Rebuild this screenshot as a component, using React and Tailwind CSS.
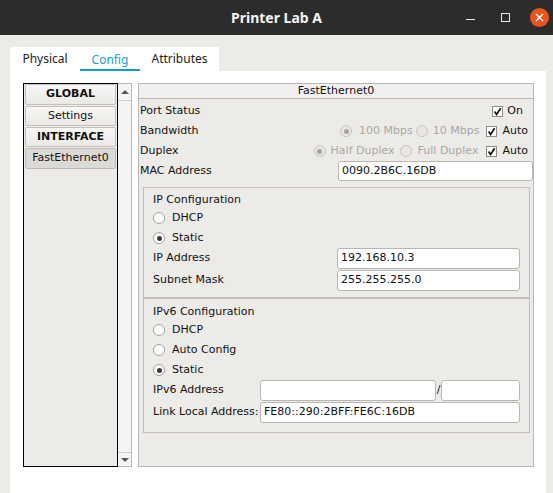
import React from "react";

const Check = () => (
  <div className="w-[11px] h-[11px] bg-white border border-[#8d8b88] flex items-center justify-center">
    <svg width="9" height="9" viewBox="0 0 9 9">
      <path d="M1.6 4.6 L3.6 7.4 L7.6 1.2" fill="none" stroke="#111" strokeWidth="1.7" />
    </svg>
  </div>
);

const Radio = ({ checked, disabled }) => (
  <div
    className={
      "w-[12px] h-[12px] rounded-full border flex items-center justify-center " +
      (disabled ? "bg-[#e8e6e3] border-[#c8c5c1]" : "bg-white border-[#a3a09b]")
    }
  >
    {checked && (
      <div
        className={
          "w-[5px] h-[5px] rounded-full " + (disabled ? "bg-[#a6a4a0]" : "bg-[#3a3a3a]")
        }
      />
    )}
  </div>
);

const Input = ({ value, className }) => (
  <div
    className={
      "h-[20px] bg-white border border-[#b9b6b1] rounded-[3px] flex items-center pl-[3px] text-[11px] text-[#111] whitespace-nowrap overflow-hidden " +
      (className || "")
    }
  >
    {value}
  </div>
);

const RadioRow = ({ label, checked, h }) => (
  <div className={"flex items-center gap-[7px] " + h}>
    <Radio checked={checked} />
    <span>{label}</span>
  </div>
);

export default function App() {
  return (
    <div className="w-[553px] h-[493px] bg-[#edebe8] flex flex-col overflow-hidden">
      {/* Title bar */}
      <div className="h-[35px] bg-[#2c2c2c] relative flex items-center justify-center shrink-0">
        <span className="text-[#f4f4f4] font-bold text-[14px] font-['Noto_Sans',sans-serif]">
          Printer Lab A
        </span>
        <div className="absolute right-[4px] top-0 h-full flex items-center">
          <div className="w-[9px] h-px bg-[#e8e8e8] mt-[3px] mr-[26px]" />
          <div className="w-[9px] h-[9px] border border-[#e8e8e8] mr-[20px]" />
          <div className="w-[19px] h-[19px] rounded-full bg-[#e9541f] flex items-center justify-center">
            <svg width="9" height="9" viewBox="0 0 9 9">
              <path d="M1 1 L8 8 M8 1 L1 8" stroke="white" strokeWidth="1.4" />
            </svg>
          </div>
        </div>
      </div>

      {/* Body */}
      <div className="flex-1 flex flex-col pl-[10px] pr-[7px] pt-[12px] min-h-0">
        {/* Tabs */}
        <div className="flex h-[24px] bg-white w-[209px] shrink-0 font-['Noto_Sans',sans-serif] text-[12px]">
          <div className="w-[70px] flex items-center justify-center text-[#222]">Physical</div>
          <div className="w-[60px] flex flex-col">
            <div className="flex-1 flex items-center justify-center text-[#1a9dd6] pt-[4px]">Config</div>
            <div className="h-[4px] bg-[#0f9bd7]" />
          </div>
          <div className="w-[79px] flex items-center justify-center text-[#222]">Attributes</div>
        </div>

        {/* Content */}
        <div className="flex-1 bg-white flex pl-[13px] pt-[12px] pb-[26px] min-h-0 font-['DejaVu_Sans',sans-serif] text-[11px] text-[#111]">
          {/* Left list */}
          <div className="w-[95px] h-full border border-black bg-[#edebe8] flex flex-col px-[1px] pt-0 gap-[1px]">
            <div className="h-[21px] rounded-[2px] border border-[#c4c1bc] bg-gradient-to-b from-[#f8f7f6] to-[#ebe9e6] flex items-center justify-center font-bold">
              GLOBAL
            </div>
            <div className="h-[20px] rounded-[2px] border border-[#c4c1bc] bg-gradient-to-b from-[#f8f7f6] to-[#ebe9e6] flex items-center justify-center">
              Settings
            </div>
            <div className="h-[20px] rounded-[2px] border border-[#c4c1bc] bg-gradient-to-b from-[#f8f7f6] to-[#ebe9e6] flex items-center justify-center font-bold">
              INTERFACE
            </div>
            <div className="h-[21px] rounded-[2px] border border-[#bdbab5] bg-[#dcdad6] flex items-center justify-center">
              FastEthernet0
            </div>
          </div>
          {/* Scrollbar */}
          <div className="w-[14px] h-full border border-[#b9b9b9] border-l-0 bg-[#f4f4f4] flex flex-col">
            <div className="h-[17px] border-b border-[#cfcfcf] flex items-center justify-center">
              <div className="w-0 h-0 border-l-[4px] border-r-[4px] border-b-[4px] border-l-transparent border-r-transparent border-b-[#555]" />
            </div>
            <div className="flex-1" />
            <div className="h-[14px] border-t border-[#cfcfcf] flex items-center justify-center">
              <div className="w-0 h-0 border-l-[4px] border-r-[4px] border-t-[4px] border-l-transparent border-r-transparent border-t-[#555]" />
            </div>
          </div>

          {/* Right panel */}
          <div className="ml-[6px] w-[396px] h-full border border-[#bcb9b4] bg-[#edebe8] flex flex-col">
            <div className="h-[15px] border-b border-[#bcb9b4] bg-[#f1f0ee] flex items-center justify-center">
              FastEthernet0
            </div>
            <div className="flex flex-col pt-[2px]">
              <div className="h-[20px] flex items-center pl-[1px] pr-[10px]">
                <span>Port Status</span>
                <div className="ml-auto flex items-center gap-[4px]">
                  <Check />
                  <span>On</span>
                </div>
              </div>
              <div className="h-[20px] flex items-center pl-[1px] pr-[5px]">
                <span>Bandwidth</span>
                <div className="ml-auto flex items-center text-[#a9a7a3]">
                  <Radio checked disabled />
                  <span className="ml-[7px]">100 Mbps</span>
                  <div className="ml-[3px]"><Radio disabled /></div>
                  <span className="ml-[5px]">10 Mbps</span>
                  <div className="ml-[7px]"><Check /></div>
                  <span className="ml-[5px] text-[#111]">Auto</span>
                </div>
              </div>
              <div className="h-[20px] flex items-center pl-[1px] pr-[5px]">
                <span>Duplex</span>
                <div className="ml-auto flex items-center text-[#a9a7a3]">
                  <Radio checked disabled />
                  <span className="ml-[5px]">Half Duplex</span>
                  <div className="ml-[5px]"><Radio disabled /></div>
                  <span className="ml-[6px]">Full Duplex</span>
                  <div className="ml-[8px]"><Check /></div>
                  <span className="ml-[5px] text-[#111]">Auto</span>
                </div>
              </div>
              <div className="h-[20px] flex items-center pl-[1px]">
                <span className="w-[198px]">MAC Address</span>
                <Input value="0090.2B6C.16DB" className="w-[195px]" />
              </div>
            </div>

            {/* IP Configuration */}
            <div className="mt-[6px] ml-[4px] mr-[3px] border border-[#c2bfba] flex flex-col pl-[9px] pt-[4px] pb-[6px]">
              <div className="h-[16px] flex items-center">IP Configuration</div>
              <RadioRow label="DHCP" h="h-[20px]" />
              <RadioRow label="Static" checked h="h-[20px]" />
              <div className="h-[21px] flex items-center">
                <span className="w-[184px]">IP Address</span>
                <Input value="192.168.10.3" className="w-[183px] h-[21px]" />
              </div>
              <div className="h-[21px] mt-[1px] flex items-center">
                <span className="w-[184px]">Subnet Mask</span>
                <Input value="255.255.255.0" className="w-[183px] h-[21px]" />
              </div>
            </div>

            {/* IPv6 Configuration */}
            <div className="ml-[4px] mr-[3px] border border-[#c2bfba] flex flex-col pl-[9px] pt-[6px] pb-[9px]">
              <div className="h-[15px] flex items-center">IPv6 Configuration</div>
              <RadioRow label="DHCP" h="h-[20px]" />
              <RadioRow label="Auto Config" h="h-[20px]" />
              <RadioRow label="Static" checked h="h-[20px]" />
              <div className="h-[21px] flex items-center">
                <span className="w-[107px] whitespace-nowrap">IPv6 Address</span>
                <Input value="" className="w-[176px] h-[21px]" />
                <span className="w-[5px] text-center">/</span>
                <Input value="" className="w-[79px] h-[21px]" />
              </div>
              <div className="h-[21px] mt-[1px] flex items-center">
                <span className="w-[107px] whitespace-nowrap">Link Local Address:</span>
                <Input value="FE80::290:2BFF:FE6C:16DB" className="w-[260px] h-[21px]" />
              </div>
            </div>
            <div className="flex-1" />
          </div>
        </div>
      </div>
    </div>
  );
}
